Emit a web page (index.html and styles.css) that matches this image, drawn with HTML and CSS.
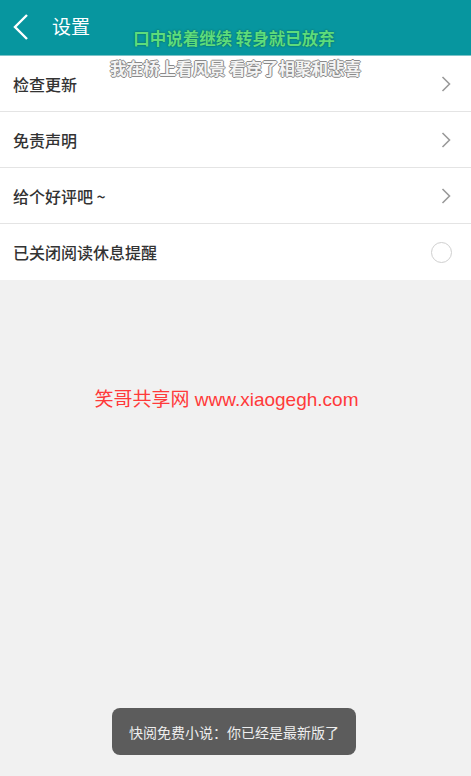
FILE: index.html
```html
<!DOCTYPE html>
<html lang="zh">
<head>
    <meta charset="UTF-8">
    <meta name="viewport" content="width=device-width, initial-scale=1.0">
    <title>设置</title>
    <link rel="stylesheet" href="styles.css">
</head>
<body>
    <div class="header">
        <svg class="header__back" width="16" height="26" viewBox="0 0 16 26">
            <polyline points="14,1 2,13 14,25" fill="none" stroke="#fff" stroke-width="2.4"/>
        </svg>
        <span class="header__title">设置</span>
    </div>

    <div class="list">
        <div class="list__row">
            <span>检查更新</span>
            <svg class="list__arrow" width="10" height="16" viewBox="0 0 10 16">
                <polyline points="1.5,1 8.5,8 1.5,15" fill="none" stroke="#9a9a9a" stroke-width="1.6"/>
            </svg>
        </div>
        <div class="list__row">
            <span>免责声明</span>
            <svg class="list__arrow" width="10" height="16" viewBox="0 0 10 16">
                <polyline points="1.5,1 8.5,8 1.5,15" fill="none" stroke="#9a9a9a" stroke-width="1.6"/>
            </svg>
        </div>
        <div class="list__row">
            <span>给个好评吧 ~</span>
            <svg class="list__arrow" width="10" height="16" viewBox="0 0 10 16">
                <polyline points="1.5,1 8.5,8 1.5,15" fill="none" stroke="#9a9a9a" stroke-width="1.6"/>
            </svg>
        </div>
        <div class="list__row">
            <span>已关闭阅读休息提醒</span>
            <span class="list__radio"></span>
        </div>
    </div>

    <div class="watermark">笑哥共享网 www.xiaogegh.com</div>

    <div class="lyric lyric--top">口中说着继续 转身就已放弃</div>
    <div class="lyric lyric--bottom">我在桥上看风景 看穿了相聚和悲喜</div>

    <div class="toast">快阅免费小说：你已经是最新版了</div>
</body>
</html>
```

FILE: styles.css
```css
body {
    margin: 0;
    width: 471px;
    height: 776px;
    background-color: #f1f1f1;
    font-family: "Noto Sans CJK SC", "Noto Sans", sans-serif;
    position: relative;
    overflow: hidden;
}

.header {
    background-color: #07969f;
    border-bottom: 1px solid #7cc3c8;
    display: flex;
    align-items: center;
    padding-left: 13px;
    box-sizing: border-box;
    height: 56px;
}

.header__back {
    margin-top: -1px;
}

.header__title {
    color: #fff;
    font-size: 19px;
    margin-left: 23px;
    margin-top: -4px;
}

.list {
    background-color: #fff;
}

.list__row {
    height: 56px;
    border-bottom: 1px solid #e4e4e4;
    display: flex;
    align-items: center;
    justify-content: space-between;
    padding: 0 20px 0 13px;
    font-size: 16px;
    color: #333;
    font-weight: 500;
    box-sizing: border-box;
}

.list__row:last-child {
    border-bottom: none;
}

.list__radio {
    width: 19px;
    height: 19px;
    border: 1.5px solid #cfcfcf;
    border-radius: 50%;
    margin-right: -1px;
}

.watermark {
    text-align: center;
    color: #ff3a3a;
    font-family: "Liberation Sans", "Noto Sans CJK SC", sans-serif;
    font-size: 19px;
    margin-top: 104px;
    padding-right: 18px;
}

.lyric {
    position: absolute;
    left: 0;
    right: 0;
    text-align: center;
    font-weight: bold;
}

.lyric--top {
    top: 26px;
    font-size: 16.5px;
    color: #5ddc7c;
    text-shadow: 0 0 2px #0b5a4a;
    padding-right: 3px;
}

.lyric--bottom {
    top: 56px;
    font-size: 16.5px;
    color: #f4f4f4;
    text-shadow: -1px 0 #8a8a8a, 1px 0 #8a8a8a, 0 -1px #8a8a8a, 0 1px #8a8a8a;
}

.toast {
    position: absolute;
    left: 112px;
    top: 708px;
    width: 244px;
    height: 47px;
    background-color: #5c5c5c;
    border-radius: 8px;
    color: #eee;
    font-size: 14px;
    display: flex;
    align-items: center;
    justify-content: center;
}
```
